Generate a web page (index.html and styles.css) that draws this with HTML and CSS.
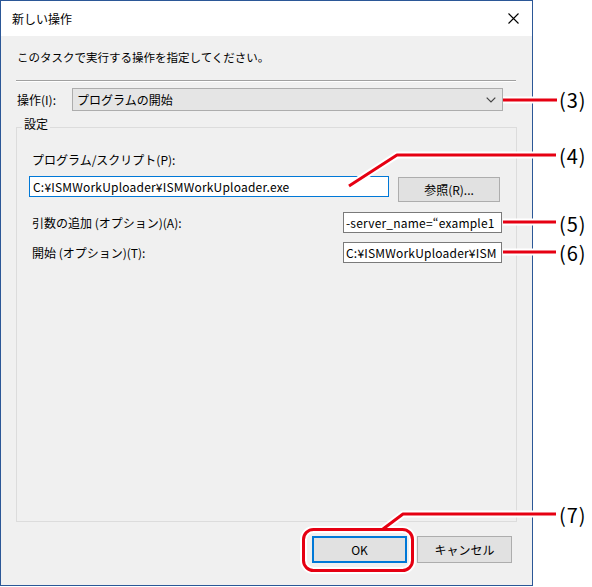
FILE: index.html
```html
<!DOCTYPE html>
<html lang="ja">
<head>
<meta charset="utf-8">
<title>新しい操作</title>
<link rel="stylesheet" href="styles.css">
</head>
<body>
<div class="window">
  <div class="titlebar">
    <span class="title">新しい操作</span>
    <svg class="close" width="11" height="11" viewBox="0 0 11 11"><path d="M0.5 0.5 L10.5 10.5 M10.5 0.5 L0.5 10.5" stroke="#000" stroke-width="1.1" fill="none"/></svg>
  </div>
  <div class="content">
    <p class="instr">このタスクで実行する操作を指定してください。</p>
    <div class="sep"></div>
    <div class="action-row">
      <span class="action-label">操作(I):</span>
      <div class="select">
        <span>プログラムの開始</span>
        <svg class="chevron" width="10" height="6" viewBox="0 0 10 6"><path d="M0.7 0.7 L5 5 L9.3 0.7" stroke="#444" stroke-width="1.2" fill="none"/></svg>
      </div>
    </div>
    <div class="group">
      <span class="legend">設定</span>
      <div class="field-label">プログラム/スクリプト(P):</div>
      <div class="prog-row">
        <div class="input prog">C:¥ISMWorkUploader¥ISMWorkUploader.exe</div>
        <div class="btn browse">参照(R)...</div>
      </div>
      <div class="opt-row first">
        <span class="opt-label">引数の追加 (オプション)(A):</span>
        <div class="input small">-server_name=“example1</div>
      </div>
      <div class="opt-row second">
        <span class="opt-label">開始 (オプション)(T):</span>
        <div class="input small">C:¥ISMWorkUploader¥ISM</div>
      </div>
    </div>
    <div class="buttons">
      <div class="btn ok">OK</div>
      <div class="btn cancel">キャンセル</div>
    </div>
  </div>
</div>

<svg class="annot" width="592" height="587" viewBox="0 0 592 587">
  <g fill="none" stroke="#fff" stroke-width="7" stroke-linejoin="round">
    <path d="M503 100 H557"/>
    <path d="M349 186 L397 155 H556"/>
    <path d="M503 222 H556"/>
    <path d="M503 252 H556"/>
    <path d="M383 529 L403 514 H556"/>
    <rect x="303.5" y="529.5" width="109" height="41" rx="10"/>
  </g>
  <g fill="none" stroke="#e60012" stroke-width="3" stroke-linejoin="round">
    <path d="M503 100 H557"/>
    <path d="M349 186 L397 155 H556"/>
    <path d="M503 222 H556"/>
    <path d="M503 252 H556"/>
    <path d="M383 529 L403 514 H556"/>
    <rect x="303.5" y="529.5" width="109" height="41" rx="10"/>
  </g>
</svg>
<span class="callout c3">(3)</span>
<span class="callout c4">(4)</span>
<span class="callout c5">(5)</span>
<span class="callout c6">(6)</span>
<span class="callout c7">(7)</span>
</body>
</html>
```

FILE: styles.css
```css
html, body {
  margin: 0;
  padding: 0;
}
body {
  position: relative;
  width: 592px;
  height: 587px;
  overflow: hidden;
  background: #ffffff;
  font-family: "Noto Sans CJK JP", "Noto Sans", sans-serif;
  font-size: 12px;
  color: #000;
}
.window {
  width: 531px;
  height: 584px;
  border: 1px solid #2b5797;
  display: flex;
  flex-direction: column;
}
.titlebar {
  height: 35px;
  flex: none;
  background: #fff;
  display: flex;
  align-items: center;
  padding-left: 11px;
}
.title {
  font-size: 12px;
  line-height: 16px;
}
.close {
  margin-left: auto;
  margin-right: 13px;
}
.content {
  flex: 1;
  background: #f0f0f0;
  padding: 0 15px;
}
.instr {
  margin: 13px 0 0 1px;
  line-height: 16px;
  font-size: 11.5px;
}
.sep {
  margin: 15px 1px 0 0;
  border-top: 1px solid #a0a0a0;
  border-bottom: 1px solid #fff;
}
.action-row {
  margin-top: 6px;
  display: flex;
  align-items: center;
  height: 23px;
}
.action-label {
  width: 55px;
  margin-left: 1px;
  line-height: 16px;
}
.select {
  box-sizing: border-box;
  width: 431px;
  height: 23px;
  background: #e5e5e5;
  border: 1px solid #adadad;
  padding-left: 4px;
  display: flex;
  align-items: center;
  line-height: 16px;
}
.chevron {
  margin-left: auto;
  margin-right: 6px;
}
.group {
  box-sizing: border-box;
  margin-top: 16px;
  height: 395px;
  border: 1px solid #dcdcdc;
  padding: 0 14px 0 12px;
}
.legend {
  display: block;
  width: fit-content;
  margin: -12px 0 0 -7px;
  padding: 0 2px;
  background: #f0f0f0;
  line-height: 16px;
}
.field-label {
  margin: 20px 0 0 3px;
  line-height: 16px;
}
.prog-row {
  margin-top: 8px;
  display: flex;
  align-items: flex-start;
}
.input {
  box-sizing: border-box;
  height: 21px;
  background: #fff;
  border: 1px solid #7a7a7a;
  padding-left: 3px;
  line-height: 19px;
  white-space: nowrap;
  overflow: hidden;
  letter-spacing: 0.2px;
}
.input.prog {
  width: 360px;
  border-color: #0078d7;
}
.input.small {
  width: 159px;
  padding-left: 2px;
}
.btn {
  box-sizing: border-box;
  background: #e1e1e1;
  border: 1px solid #adadad;
  display: flex;
  align-items: center;
  justify-content: center;
  line-height: 16px;
}
.browse {
  width: 102px;
  height: 25px;
  margin: 1px 0 0 9px;
}
.opt-row {
  display: flex;
  align-items: center;
  justify-content: space-between;
}
.opt-row.first {
  margin-top: 10px;
}
.opt-row.second {
  margin-top: 9px;
}
.opt-label {
  margin-left: 3px;
  line-height: 16px;
}
.buttons {
  margin-top: 14px;
  display: flex;
  justify-content: flex-end;
  gap: 10px;
  padding-right: 5px;
}
.buttons .btn {
  width: 95px;
  height: 27px;
}
.btn.ok {
  border: 2px solid #0078d7;
}
.annot {
  position: absolute;
  left: 0;
  top: 0;
  pointer-events: none;
}
.callout {
  position: absolute;
  left: 559px;
  font-family: "Noto Sans CJK JP", "Noto Sans", sans-serif;
  font-size: 20px;
  line-height: 22px;
  letter-spacing: 1px;
  color: #000;
}
.c3 { top: 89px; }
.c4 { top: 145px; }
.c5 { top: 213px; }
.c6 { top: 242px; }
.c7 { top: 504px; }
```
